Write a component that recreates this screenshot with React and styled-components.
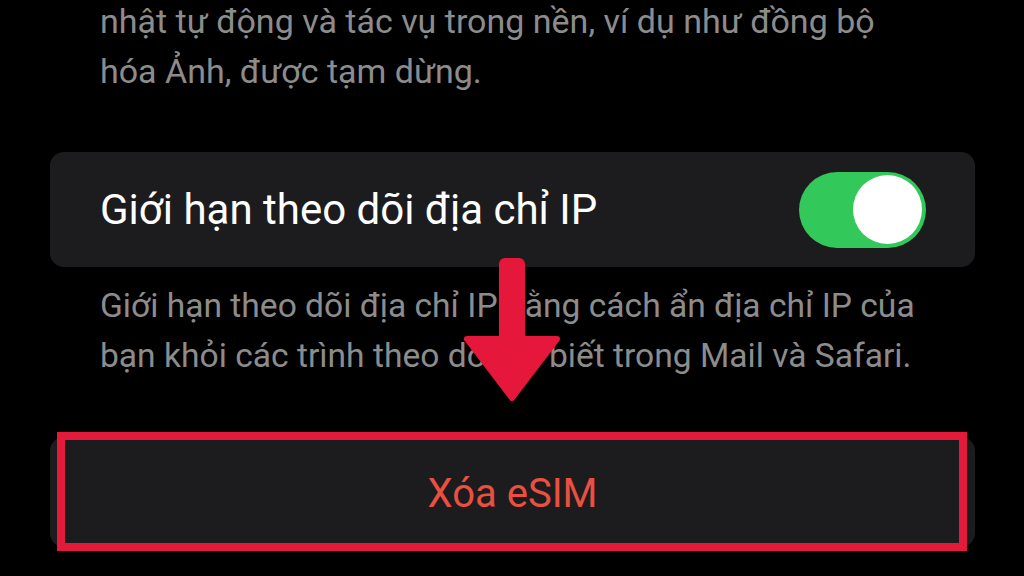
import styled, { createGlobalStyle } from 'styled-components'

const GlobalStyle = createGlobalStyle`
  html, body {
    margin: 0;
    padding: 0;
    background: #000;
  }
  body {
    font-family: Roboto, 'Liberation Sans', Arial, sans-serif;
    -webkit-font-smoothing: antialiased;
  }
`

const Screen = styled.div`
  position: relative;
  width: 1024px;
  height: 576px;
  overflow: hidden;
  background: #000;
  padding: 0 49px 0 50px;
  box-sizing: border-box;
  display: flex;
  flex-direction: column;
`

const Note = styled.p`
  margin: ${(p) => p.$top || 0}px 0 0;
  padding: 0 40px 0 50px;
  font-size: ${(p) => p.$size || 34}px;
  line-height: 50px;
  color: #8c8c8c;
  white-space: nowrap;
`

const Group = styled.div`
  margin-top: ${(p) => p.$top || 0}px;
  height: ${(p) => p.$height}px;
  border-radius: 14px;
  background: #1c1c1e;
  display: flex;
  align-items: center;
  justify-content: ${(p) => (p.$center ? 'center' : 'space-between')};
  padding: ${(p) => (p.$center ? '0' : '0 49px 0 50px')};
  box-sizing: border-box;
  position: relative;
`

const RowLabel = styled.span`
  font-size: 42px;
  color: #fff;
  white-space: nowrap;
`

const Switch = styled.div`
  width: 127px;
  height: 76px;
  border-radius: 38px;
  background: #32c85a;
  display: flex;
  align-items: center;
  justify-content: flex-end;
  padding: 0 4px;
  box-sizing: border-box;
`

const Knob = styled.div`
  width: 69px;
  height: 69px;
  border-radius: 50%;
  background: #fff;
`

const DangerLabel = styled.span`
  font-size: 40px;
  color: #eb4f3f;
  margin-top: 2px;
`

const Highlight = styled.div`
  position: absolute;
  left: 7px;
  top: -5px;
  width: 910px;
  height: 119px;
  border: 8px solid #e31b3b;
  box-sizing: border-box;
  pointer-events: none;
`

const Arrow = styled.svg`
  position: absolute;
  left: 462px;
  top: 257px;
`

export default function App() {
  return (
    <>
      <GlobalStyle />
      <Screen>
        <Note $top={-4}>
          nhật tự động và tác vụ trong nền, ví dụ như đồng bộ
          <br />
          hóa Ảnh, được tạm dừng.
        </Note>

        <Group $top={56} $height={115}>
          <RowLabel>Giới hạn theo dõi địa chỉ IP</RowLabel>
          <Switch>
            <Knob />
          </Switch>
        </Group>

        <Note $top={14} $size={33.6}>
          Giới hạn theo dõi địa chỉ IP bằng cách ẩn địa chỉ IP của
          <br />
          bạn khỏi các trình theo dõi đã biết trong Mail và Safari.
        </Note>

        <Group $top={56} $height={110} $center>
          <DangerLabel>Xóa eSIM</DangerLabel>
          <Highlight />
        </Group>

        <Arrow width="100" height="147" viewBox="0 0 100 147">
          <rect x="37" y="1" width="26" height="90" rx="6" fill="#e5173a" />
          <polygon
            points="5,82 95,82 50,141"
            fill="#e5173a"
            stroke="#e5173a"
            strokeWidth="6"
            strokeLinejoin="round"
          />
        </Arrow>
      </Screen>
    </>
  )
}
